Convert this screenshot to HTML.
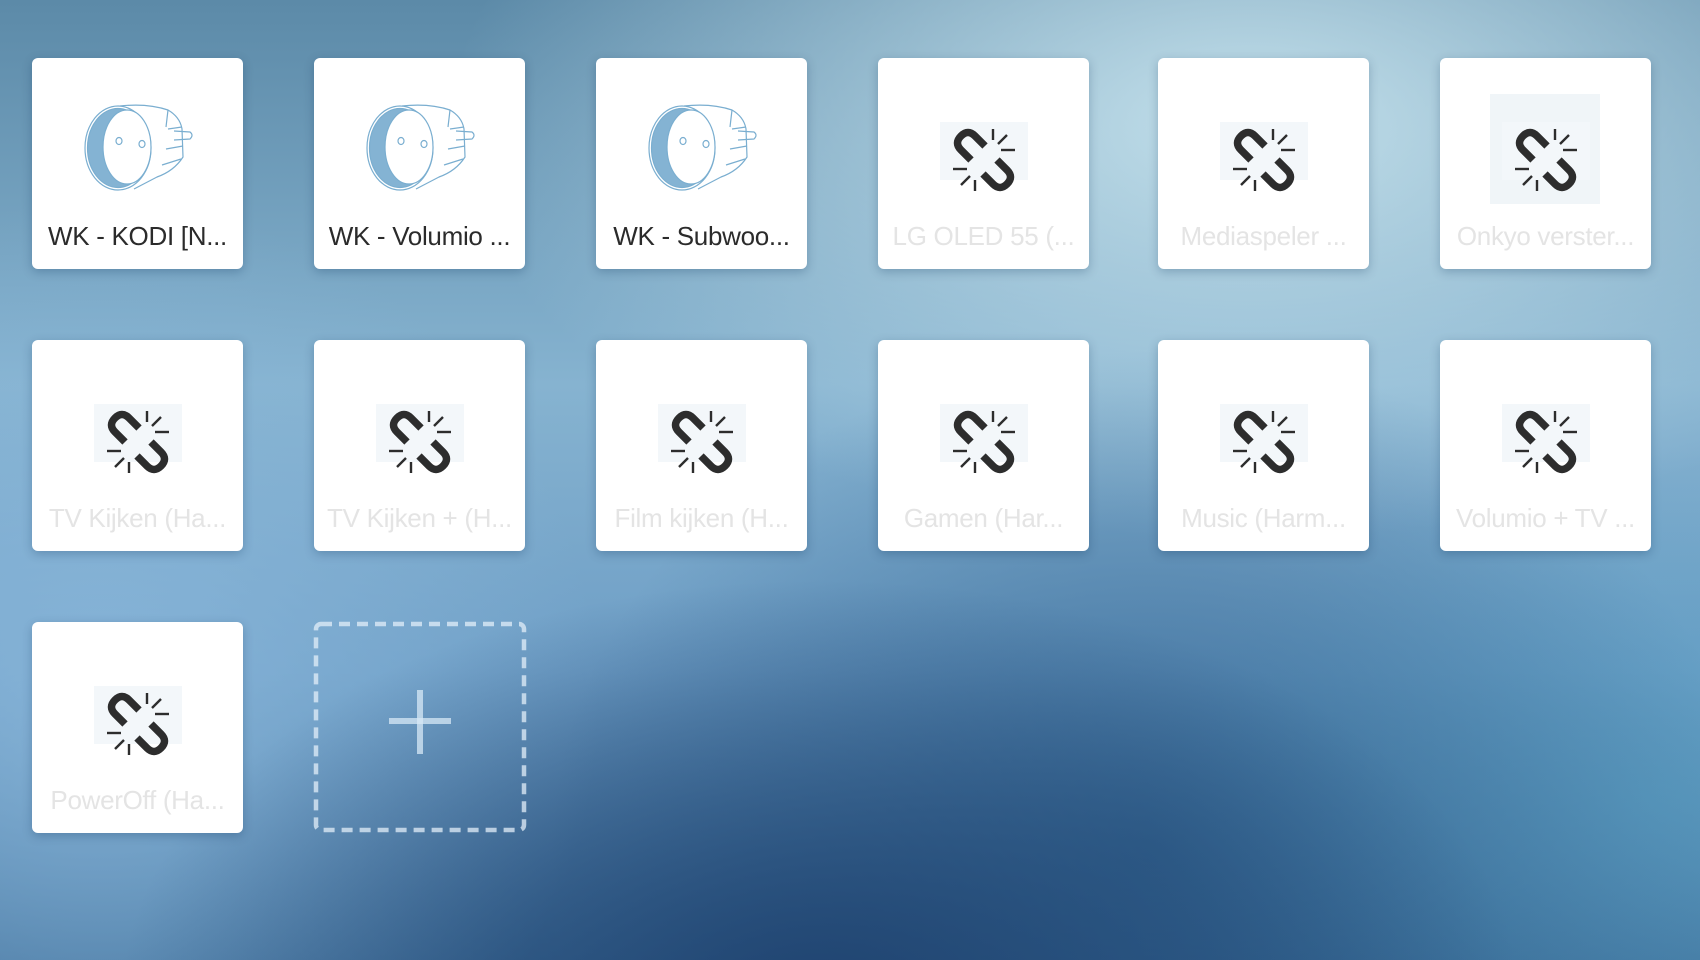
<!DOCTYPE html>
<html><head><meta charset="utf-8"><style>
html,body{margin:0;padding:0;width:1700px;height:960px;overflow:hidden;}
body{position:relative;font-family:"Liberation Sans",sans-serif;
background:
radial-gradient(ellipse 700px 420px at 820px 1000px, rgba(30,65,110,0.95), rgba(30,65,110,0) 100%),
radial-gradient(ellipse 600px 500px at 1150px 850px, rgba(40,90,135,0.7), rgba(40,90,135,0) 100%),
radial-gradient(ellipse 800px 420px at 1250px 120px, rgba(200,228,238,0.95), rgba(200,228,238,0) 100%),
radial-gradient(ellipse 500px 500px at 100px 700px, rgba(140,185,220,0.8), rgba(140,185,220,0) 100%),
radial-gradient(ellipse 500px 350px at 1650px 800px, rgba(90,160,195,0.7), rgba(90,160,195,0) 100%),
linear-gradient(180deg,#5c8aa8 0%,#86b3d0 40%,#6e9ec6 70%,#3f6f9a 100%);}
.card{position:absolute;width:211px;height:211px;background:#fff;border-radius:6px;box-shadow:0 3px 10px rgba(0,40,80,0.25);}
.card .ic{position:absolute;left:50%;top:102px;transform:translate(-50%,-50%);}
.card .t{position:absolute;left:0;right:0;top:163px;text-align:center;font-size:26px;color:#e4e4e4;white-space:nowrap;letter-spacing:-0.3px;}
.card .t.on{color:#2b2b2b;}
</style></head><body>

<svg width="0" height="0" style="position:absolute">
<defs>
<g id="brk">
<rect x="-14" y="-8" width="88" height="58" fill="#f3f7fa"/>
<path d="M31,16 L21,6 Q14,-1 7,6 Q0,13 7,20 L17,30" fill="none" stroke="#2d2d2d" stroke-width="7.5"/>
<path d="M29,44 L39,54 Q46,61 53,54 Q60,47 53,40 L43,30" fill="none" stroke="#2d2d2d" stroke-width="7.5"/>
<g stroke="#2d2d2d" stroke-width="2.4">
<line x1="39" y1="-1" x2="39" y2="10"/><line x1="44" y1="14" x2="53" y2="5"/><line x1="47" y1="20" x2="61" y2="20"/>
<line x1="-1" y1="39" x2="13" y2="39"/><line x1="7" y1="55" x2="16" y2="46"/><line x1="21" y1="50" x2="21" y2="61"/>
</g>
</g>
<g id="plug" fill="none" stroke="#7aaed0" stroke-width="1.2">
<path d="M58,17 Q85,14 106,21 Q118,28 120,40 L121,68 Q112,82 95,88 L72,100"/>
<path d="M112,42 L128,43 Q132,46 128,50 L112,51"/>
<path d="M106,40 L120,38 M104,60 L121,57 M100,76 L119,70 M106,21 L104,38"/>
<ellipse cx="56" cy="59" rx="33" ry="42"/>
<ellipse cx="56" cy="59" rx="30.5" ry="39.5" fill="#84b3d3" stroke="#7aaed0"/>
<ellipse cx="65" cy="58" rx="24" ry="37" fill="#fff"/>
<ellipse cx="57" cy="52" rx="3" ry="3.5"/>
<ellipse cx="80" cy="55" rx="3" ry="3.5"/>
</g>
</defs></svg>

<div class="card" style="left:32px;top:58px"><svg class="ic" width="112" height="90" viewBox="20 14 112 90" style="top:90px"><use href="#plug"/></svg><div class="t on">WK - KODI [N...</div></div>
<div class="card" style="left:314px;top:58px"><svg class="ic" width="112" height="90" viewBox="20 14 112 90" style="top:90px"><use href="#plug"/></svg><div class="t on">WK - Volumio ...</div></div>
<div class="card" style="left:596px;top:58px"><svg class="ic" width="112" height="90" viewBox="20 14 112 90" style="top:90px"><use href="#plug"/></svg><div class="t on">WK - Subwoo...</div></div>
<div class="card" style="left:878px;top:58px"><svg class="ic" width="110" height="90" viewBox="-25 -15 110 90"><use href="#brk"/></svg><div class="t">LG OLED 55 (...</div></div>
<div class="card" style="left:1158px;top:58px"><svg class="ic" width="110" height="90" viewBox="-25 -15 110 90"><use href="#brk"/></svg><div class="t">Mediaspeler ...</div></div>
<div class="card" style="left:1440px;top:58px"><div style="position:absolute;left:50px;top:36px;width:110px;height:110px;background:#f0f5f8"></div><svg class="ic" width="110" height="90" viewBox="-25 -15 110 90"><use href="#brk"/></svg><div class="t">Onkyo verster...</div></div>

<div class="card" style="left:32px;top:340px"><svg class="ic" width="110" height="90" viewBox="-25 -15 110 90"><use href="#brk"/></svg><div class="t">TV Kijken (Ha...</div></div>
<div class="card" style="left:314px;top:340px"><svg class="ic" width="110" height="90" viewBox="-25 -15 110 90"><use href="#brk"/></svg><div class="t">TV Kijken + (H...</div></div>
<div class="card" style="left:596px;top:340px"><svg class="ic" width="110" height="90" viewBox="-25 -15 110 90"><use href="#brk"/></svg><div class="t">Film kijken (H...</div></div>
<div class="card" style="left:878px;top:340px"><svg class="ic" width="110" height="90" viewBox="-25 -15 110 90"><use href="#brk"/></svg><div class="t">Gamen (Har...</div></div>
<div class="card" style="left:1158px;top:340px"><svg class="ic" width="110" height="90" viewBox="-25 -15 110 90"><use href="#brk"/></svg><div class="t">Music (Harm...</div></div>
<div class="card" style="left:1440px;top:340px"><svg class="ic" width="110" height="90" viewBox="-25 -15 110 90"><use href="#brk"/></svg><div class="t">Volumio + TV ...</div></div>

<div class="card" style="left:32px;top:622px"><svg class="ic" width="110" height="90" viewBox="-25 -15 110 90"><use href="#brk"/></svg><div class="t">PowerOff (Ha...</div></div>

<svg style="position:absolute;left:312px;top:620px" width="216" height="214">
<rect x="4" y="4" width="208" height="206" rx="5" fill="none" stroke="rgba(225,238,248,0.75)" stroke-width="4.5" stroke-dasharray="11 7"/>
<rect x="105" y="70" width="6" height="64" fill="rgba(215,232,245,0.75)"/>
<rect x="77" y="98" width="62" height="6" fill="rgba(215,232,245,0.75)"/>
</svg>
</body></html>
